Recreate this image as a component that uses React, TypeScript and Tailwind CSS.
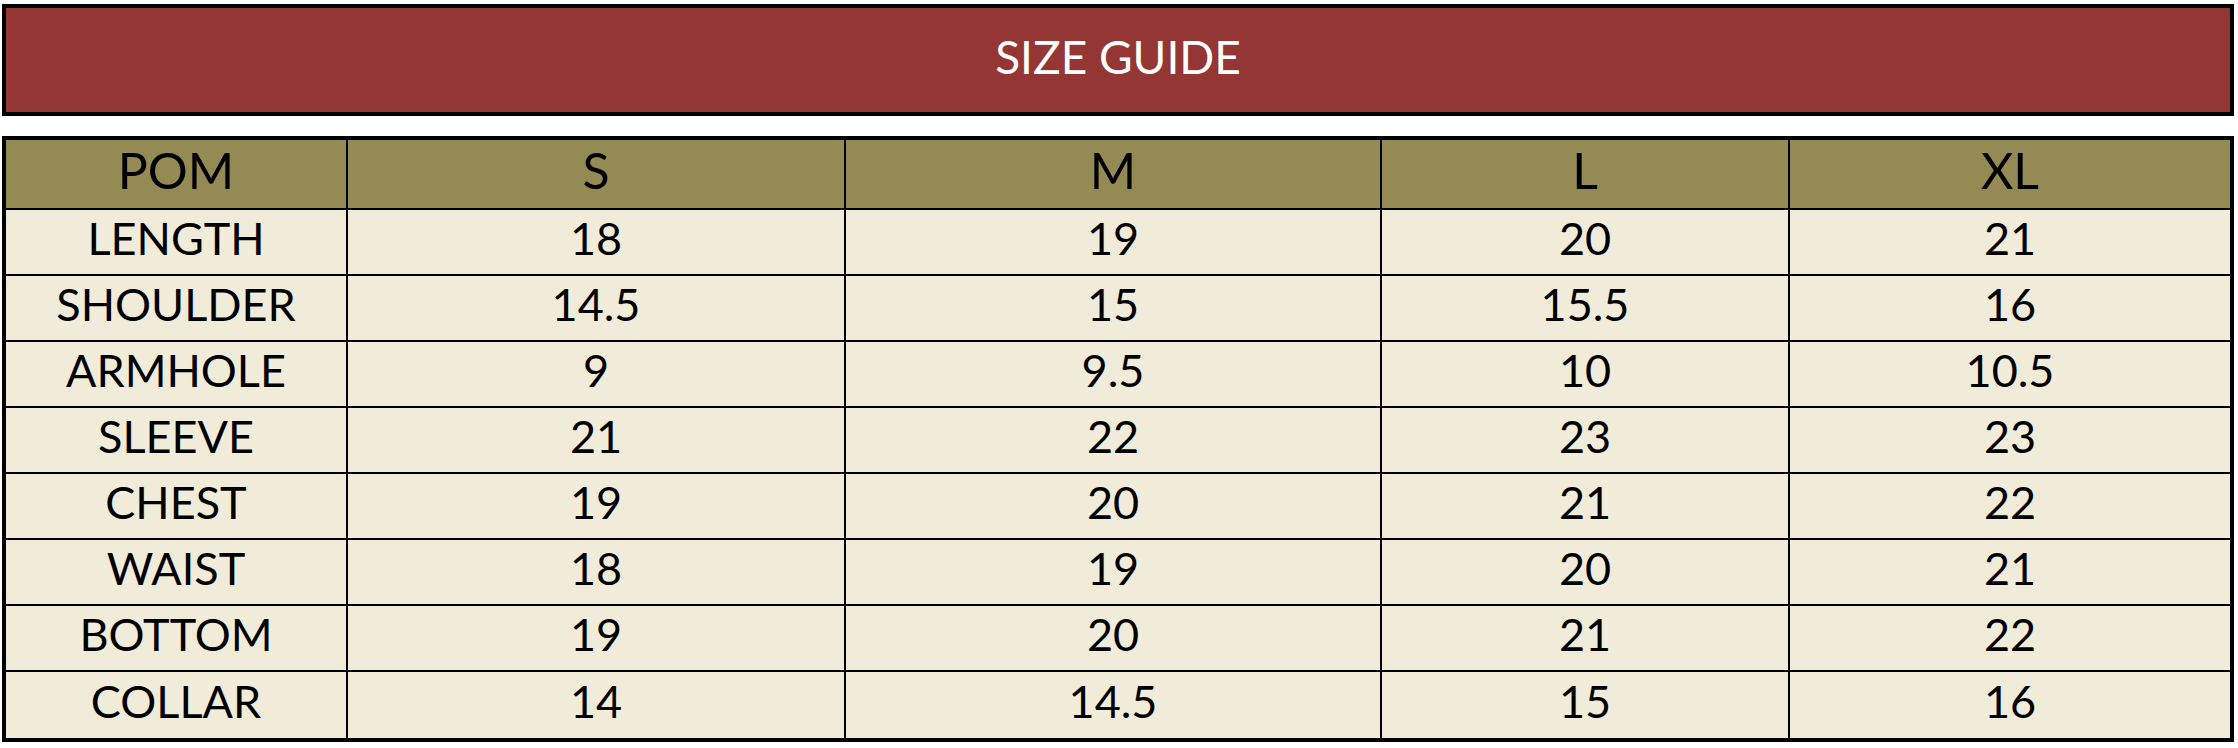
const headers = ["POM", "S", "M", "L", "XL"];

const rows: [string, string, string, string, string][] = [
  ["LENGTH", "18", "19", "20", "21"],
  ["SHOULDER", "14.5", "15", "15.5", "16"],
  ["ARMHOLE", "9", "9.5", "10", "10.5"],
  ["SLEEVE", "21", "22", "23", "23"],
  ["CHEST", "19", "20", "21", "22"],
  ["WAIST", "18", "19", "20", "21"],
  ["BOTTOM", "19", "20", "21", "22"],
  ["COLLAR", "14", "14.5", "15", "16"],
];

export default function App() {
  return (
    <main className="h-[748px] w-[2238px] bg-white pt-[4px] pl-[2px] font-['Lato','Liberation_Sans',sans-serif] text-black">
      <div className="flex h-[112px] w-[2232px] items-center justify-center border-4 border-black bg-[#943634] pb-[6px]">
        <h1 className="text-[46px] leading-none font-normal text-white">SIZE GUIDE</h1>
      </div>

      <div className="mt-[20px] grid w-[2232px] grid-cols-[340px_496px_534px_406px_440px] grid-rows-[68px_repeat(7,64px)_66px] gap-[2px] border-4 border-black bg-black">
        {headers.map((h) => (
          <div
            key={h}
            className="flex items-center justify-center bg-[#948A54] pb-[8px] text-[50px] leading-none"
          >
            {h}
          </div>
        ))}

        {rows.map((row) =>
          row.map((cell, i) => (
            <div
              key={row[0] + i}
              className="flex items-center justify-center bg-[#F1ECDA] pb-[7px] text-[45px] leading-none"
            >
              {cell}
            </div>
          ))
        )}
      </div>
    </main>
  );
}
